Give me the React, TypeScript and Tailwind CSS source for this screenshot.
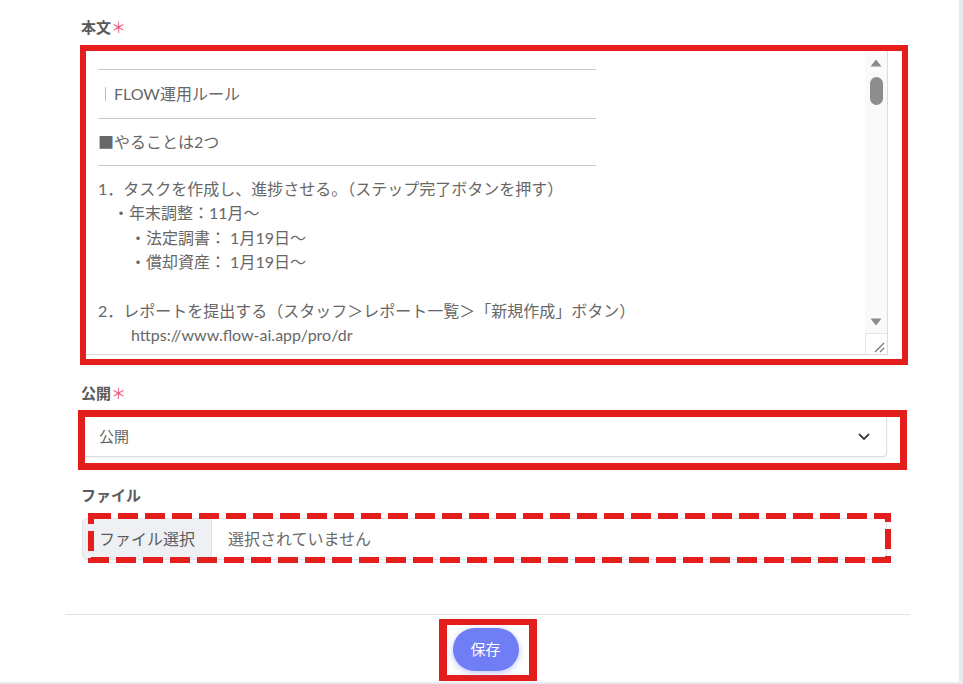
import React from "react";

const RED = "border-[#e41d1d]";

function Label({ text, required }: { text: string; required?: boolean }) {
  return (
    <div className="h-[20px] leading-[20px] text-[15px] font-bold text-[#5a5a5a]">
      {text}
      {required && <span className="font-normal text-[#f1587a]">＊</span>}
    </div>
  );
}

function Rule() {
  return <div className="w-[498px] h-px bg-[#c9c9c9]" />;
}

function BodyEditor() {
  const lines = [
    { text: "1．タスクを作成し、進捗させる。（ステップ完了ボタンを押す）", indent: "" },
    { text: "・年末調整：11月～", indent: "pl-[15px]" },
    { text: "・法定調書： 1月19日～", indent: "pl-[32px]" },
    { text: "・償却資産： 1月19日～", indent: "pl-[32px]" },
    { text: "\u00a0", indent: "" },
    { text: "2．レポートを提出する（スタッフ＞レポート一覧＞「新規作成」ボタン）", indent: "" },
    { text: "https://www.flow-ai.app/pro/dr", indent: "pl-[33px]" },
  ];

  return (
    <div className="w-[802px] h-[304px] flex border-r border-b border-[#dcdcdc] bg-white">
      <div className="flex-1 overflow-hidden pt-[18px] pl-[12px] text-[16px] text-[#676767]">
        <Rule />
        <div className="mt-[12px] h-[24px] leading-[24px] flex items-center">
          <span className="ml-[7px] mr-[8px] w-px h-[14px] bg-[#9fc4ea]" />
          FLOW運用ルール
        </div>
        <div className="mt-[12px]">
          <Rule />
        </div>
        <div className="mt-[11px] h-[24px] leading-[24px]">■やることは2つ</div>
        <div className="mt-[11px]">
          <Rule />
        </div>
        <div className="mt-[11px]">
          {lines.map((line, i) => (
            <div key={i} className={`h-[24.4px] leading-[24.4px] whitespace-nowrap ${line.indent}`}>
              {line.text}
            </div>
          ))}
        </div>
      </div>

      {/* scrollbar column */}
      <div className="w-[22px] flex flex-col items-center bg-[#fafafa]">
        <svg width="12" height="8" viewBox="0 0 12 8" className="mt-[8px]">
          <path d="M6 0.5 L11.5 7.5 L0.5 7.5 Z" fill="#8a8a8a" />
        </svg>
        <div className="mt-[10px] w-[13px] h-[28px] rounded-full bg-[#8d8d8d]" />
        <div className="flex-1" />
        <svg width="12" height="8" viewBox="0 0 12 8" className="mb-[7px]">
          <path d="M0.5 0.5 L11.5 0.5 L6 7.5 Z" fill="#8a8a8a" />
        </svg>
        <div className="w-full h-[21px] bg-white border-t border-l border-[#e3e3e3] flex items-end justify-end pr-[2px] pb-[1px]">
          <svg width="12" height="12" viewBox="0 0 12 12">
            <path d="M11 2 L2 11 M11 7 L7 11" stroke="#777" strokeWidth="1.2" />
          </svg>
        </div>
      </div>
    </div>
  );
}

export default function App() {
  return (
    <div className="w-[963px] h-[684px] bg-[#e9e9ef] overflow-hidden font-['Lato','Noto_Sans_CJK_JP',sans-serif]">
      <div className="w-[959px] h-[682px] bg-white">
        <div className="ml-[65px] w-[845px]">
          <div className="pl-[16px] pt-[17px]">
            <Label text="本文" required />
            <div className={`mt-[8px] -ml-[1px] w-[828px] h-[320px] border-[6px] ${RED}`}>
              <BodyEditor />
            </div>

            <div className="mt-[18px]">
              <Label text="公開" required />
            </div>
            <div className={`mt-[7px] -ml-[3px] w-[829px] h-[60px] border-[7px] ${RED}`}>
              <div className="w-[802px] h-[40px] flex items-center justify-between pl-[14px] pr-[16px] bg-white border-b border-r border-[#dddddd] rounded-br-[4px] shadow-[0_1px_2px_rgba(0,0,0,0.05)]">
                <span className="text-[15px] text-[#666]">公開</span>
                <svg width="12" height="8" viewBox="0 0 12 8">
                  <path d="M1.5 1.5 L6 6 L10.5 1.5" stroke="#444" strokeWidth="1.8" fill="none" strokeLinecap="round" strokeLinejoin="round" />
                </svg>
              </div>
            </div>

            <div className="mt-[15px]">
              <Label text="ファイル" />
            </div>
            <div className="relative mt-[13px] ml-[1px] w-[805px]">
              <div className="h-[42px] flex border border-[#dee2e6] rounded-[5px] overflow-hidden text-[16px]">
                <div className="w-[129px] flex items-center pl-[16px] bg-[#eef0f4] border-r border-[#dee2e6] text-[#5c5c5c]">
                  ファイル選択
                </div>
                <div className="flex items-center pl-[16px] text-[#6a6a6a]">選択されていません</div>
              </div>
              <svg className="absolute left-[6px] -top-[5px]" width="803" height="50" viewBox="0 0 803 50">
                <rect x="3" y="3" width="797" height="44" fill="none" stroke="#e41d1d" strokeWidth="6" strokeDasharray="20 7" />
              </svg>
            </div>
          </div>

          <div className="mt-[54px] h-px bg-[#e2e2e2]" />

          <div className="flex justify-center mt-[4px]">
            <div className={`border-x-[8px] border-y-[6px] ${RED} pl-[6px] pr-[10px] pt-[3px] pb-[4px]`}>
              <button className="w-[66px] h-[43px] rounded-full bg-[#6f7ef5] text-white text-[15px] shadow-[0_2px_6px_rgba(111,126,245,0.45)]">
                保存
              </button>
            </div>
          </div>
        </div>
      </div>
    </div>
  );
}
